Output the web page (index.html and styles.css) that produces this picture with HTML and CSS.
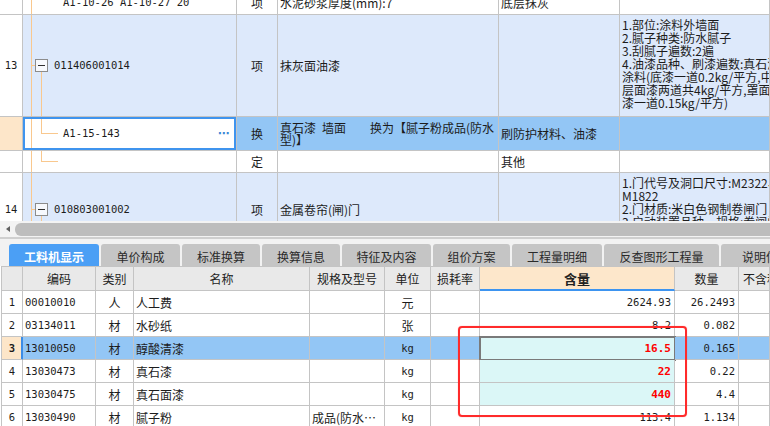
FILE: index.html
```html
<!DOCTYPE html>
<html lang="zh">
<head>
<meta charset="utf-8">
<link rel="stylesheet" href="styles.css">
</head>
<body>
<div class="upper">
  <div class="row r12">
    <div class="c num"></div>
    <div class="c code lv sub"><span class="cut n">A1-10-26&ensp;A1-10-27&ensp;20</span></div>
    <div class="c ctr"><span class="cut">项</span></div>
    <div class="c"><span class="cut">水泥砂浆厚度(mm):7</span></div>
    <div class="c"><span class="cut">底层抹灰</span></div>
    <div class="c"></div>
  </div>
  <div class="row r13 lb">
    <div class="c num wh"><span class="n">13</span></div>
    <div class="c code tree-item"><span class="box"><i></i></span><span class="n">011406001014</span></div>
    <div class="c ctr">项</div>
    <div class="c">抹灰面油漆</div>
    <div class="c"></div>
    <div class="c feat">1.部位:涂料外墙面<br>2.腻子种类:防水腻子<br>3.刮腻子遍数:2遍<br>4.油漆品种、刷漆遍数:真石漆<br>涂料(底漆一道0.2kg/平方,中<br>层面漆两道共4kg/平方,罩面<br>漆一道0.15kg/平方)</div>
  </div>
  <div class="row rsub">
    <div class="c num pe"></div>
    <div class="c code tree-leaf focus"><span class="n">A1-15-143</span><span class="more">⋯</span></div>
    <div class="c ctr bl">换</div>
    <div class="c bl multi">真石漆&ensp;墙面&ensp;&ensp;&ensp;&ensp;换为【腻子粉成品(防水<br>型)】</div>
    <div class="c bl">刷防护材料、油漆</div>
    <div class="c bl"></div>
  </div>
  <div class="row rding">
    <div class="c num"></div>
    <div class="c code tree-leaf"></div>
    <div class="c ctr">定</div>
    <div class="c"></div>
    <div class="c">其他</div>
    <div class="c"></div>
  </div>
  <div class="row r14 lb">
    <div class="c num wh"><span class="n">14</span></div>
    <div class="c code tree-item"><span class="box"><i></i></span><span class="n">010803001002</span></div>
    <div class="c ctr">项</div>
    <div class="c">金属卷帘(闸)门</div>
    <div class="c"></div>
    <div class="c feat">1.门代号及洞口尺寸:M2322、<br>M1822<br>2.门材质:米白色钢制卷闸门<br>3.启动装置品种、规格:卷闸门<br>电机</div>
  </div>
</div>

<div class="hscroll">
  <span class="arrow"></span>
  <span class="thumb"></span>
</div>

<div class="tabbar">
  <div class="tab active w1">工料机显示</div>
  <div class="tab w2">单价构成</div>
  <div class="tab w3">标准换算</div>
  <div class="tab w3">换算信息</div>
  <div class="tab w5">特征及内容</div>
  <div class="tab w6">组价方案</div>
  <div class="tab w7">工程量明细</div>
  <div class="tab w8">反查图形工程量</div>
  <div class="tab w9">说明信息</div>
</div>

<div class="lower">
  <div class="lrow head">
    <div class="d"></div>
    <div class="d ctr">编码</div>
    <div class="d ctr">类别</div>
    <div class="d ctr">名称</div>
    <div class="d ctr">规格及型号</div>
    <div class="d ctr">单位</div>
    <div class="d ctr">损耗率</div>
    <div class="d ctr qty-h">含量</div>
    <div class="d ctr">数量</div>
    <div class="d">不含税市场价</div>
  </div>
  <div class="lrow">
    <div class="d ctr"><span class="n">1</span></div>
    <div class="d"><span class="n">00010010</span></div>
    <div class="d ctr">人</div>
    <div class="d">人工费</div>
    <div class="d"></div>
    <div class="d ctr">元</div>
    <div class="d"></div>
    <div class="d rt"><span class="n">2624.93</span></div>
    <div class="d rt"><span class="n">26.2493</span></div>
    <div class="d"></div>
  </div>
  <div class="lrow">
    <div class="d ctr"><span class="n">2</span></div>
    <div class="d"><span class="n">03134011</span></div>
    <div class="d ctr">材</div>
    <div class="d">水砂纸</div>
    <div class="d"></div>
    <div class="d ctr">张</div>
    <div class="d"></div>
    <div class="d rt"><span class="n">8.2</span></div>
    <div class="d rt"><span class="n">0.082</span></div>
    <div class="d"></div>
  </div>
  <div class="lrow sel">
    <div class="d ctr selnum"><span class="n b">3</span></div>
    <div class="d"><span class="n">13010050</span></div>
    <div class="d ctr">材</div>
    <div class="d">醇酸清漆</div>
    <div class="d"></div>
    <div class="d ctr"><span class="n">kg</span></div>
    <div class="d"></div>
    <div class="d rt cy edit"><span class="n red">16.5</span></div>
    <div class="d rt"><span class="n">0.165</span></div>
    <div class="d"></div>
  </div>
  <div class="lrow">
    <div class="d ctr"><span class="n">4</span></div>
    <div class="d"><span class="n">13030473</span></div>
    <div class="d ctr">材</div>
    <div class="d">真石漆</div>
    <div class="d"></div>
    <div class="d ctr"><span class="n">kg</span></div>
    <div class="d"></div>
    <div class="d rt cy"><span class="n red">22</span></div>
    <div class="d rt"><span class="n">0.22</span></div>
    <div class="d"></div>
  </div>
  <div class="lrow">
    <div class="d ctr"><span class="n">5</span></div>
    <div class="d"><span class="n">13030475</span></div>
    <div class="d ctr">材</div>
    <div class="d">真石面漆</div>
    <div class="d"></div>
    <div class="d ctr"><span class="n">kg</span></div>
    <div class="d"></div>
    <div class="d rt cy"><span class="n red">440</span></div>
    <div class="d rt"><span class="n">4.4</span></div>
    <div class="d"></div>
  </div>
  <div class="lrow">
    <div class="d ctr"><span class="n">6</span></div>
    <div class="d"><span class="n">13030490</span></div>
    <div class="d ctr">材</div>
    <div class="d">腻子粉</div>
    <div class="d">成品(防水…</div>
    <div class="d ctr"><span class="n">kg</span></div>
    <div class="d"></div>
    <div class="d rt"><span class="n">113.4</span></div>
    <div class="d rt"><span class="n">1.134</span></div>
    <div class="d"></div>
  </div>
</div>

<div class="redmark"></div>
</body>
</html>
```

FILE: styles.css
```css
html, body {
  margin: 0;
  padding: 0;
}
body {
  width: 770px;
  height: 426px;
  overflow: hidden;
  background: #ffffff;
  color: #1c1c1c;
  font-family: "Noto Sans CJK SC", "Noto Sans", sans-serif;
  font-size: 12px;
  line-height: 13px;
}

.n {
  font-family: "DejaVu Sans Mono", "Liberation Mono", monospace;
  font-size: 10.5px;
}
.b { font-weight: bold; }

/* ---------- upper grid ---------- */
.upper {
  height: 221px;
  overflow: hidden;
  background: #ffffff;
}
.row {
  display: grid;
  grid-template-columns: 23px 214px 41px 221px 121px 1fr;
}
.c {
  box-sizing: border-box;
  border-right: 1px solid #c4c4c4;
  border-bottom: 1px solid #c4c4c4;
  display: flex;
  align-items: center;
  overflow: hidden;
  white-space: nowrap;
  min-width: 0;
  padding: 0 2px;
}
.c.ctr, .c.num { justify-content: center; padding: 0; }

.r12 { height: 15px; }
.r12 .c { align-items: flex-end; }
.cut { line-height: 13px; margin-bottom: 5px; flex: none; }
.r13 { height: 102px; }
.rsub { height: 34px; }
.rding { height: 22px; }
.r14 { height: 74px; }

.lb .c { background-color: #dde9fb; }
.lb .c.wh { background-color: #ffffff; }
.c.bl { background-color: #93c6f5; }
.c.pe { background-color: #fde6c9; }

.feat {
  align-items: flex-start;
  padding-top: 3px;
  line-height: 13px;
}
.multi { line-height: 12px; padding-top: 0; }

/* tree lines */
.code { padding-left: 12px; gap: 6px; }
.code.sub { padding-left: 40px; }
.lv {
  background-image: linear-gradient(#f9c88e, #f9c88e);
  background-repeat: no-repeat;
  background-position: 8px 0;
  background-size: 1px 100%;
}
.tree-item {
  background-image:
    linear-gradient(#f9c88e, #f9c88e),
    linear-gradient(#f9c88e, #f9c88e),
    linear-gradient(#f9c88e, #f9c88e);
  background-repeat: no-repeat;
  background-position: 8px 0, 8px 50%, 18px 100%;
  background-size: 1px 100%, 4px 1px, 1px calc(50% - 6px);
}
.tree-leaf {
  padding-left: 40px;
  background-color: #ffffff;
  background-image:
    linear-gradient(#f9c88e, #f9c88e),
    linear-gradient(#f9c88e, #f9c88e),
    linear-gradient(#f9c88e, #f9c88e);
  background-repeat: no-repeat;
  background-position: 8px 0, 18px 0, 18px 50%;
  background-size: 1px 100%, 1px 50%, 17px 1px;
}
.focus {
  box-shadow: inset 0 0 0 2px #3f94ee;
  padding-right: 7px;
}
.more {
  margin-left: auto;
  color: #3a86d6;
  font-family: "DejaVu Sans", sans-serif;
  font-weight: bold;
  font-size: 11px;
}
.box {
  box-sizing: border-box;
  width: 13px;
  height: 13px;
  border: 1px solid #8c8c8c;
  background: #f7f9fd;
  display: flex;
  align-items: center;
  justify-content: center;
  flex: none;
}
.box i {
  display: block;
  width: 7px;
  height: 1px;
  background: #303030;
}

/* ---------- horizontal scrollbar ---------- */
.hscroll {
  height: 16px;
  background: #f3f3f3;
  display: flex;
  align-items: center;
}
.arrow {
  width: 0;
  height: 0;
  margin-left: 6px;
  border-top: 3px solid transparent;
  border-bottom: 3px solid transparent;
  border-right: 4px solid #606060;
}
.thumb {
  flex: 1;
  height: 13px;
  margin-left: 5px;
  background: #bdbdbd;
  border-radius: 6px 0 0 6px;
}

/* ---------- tabs ---------- */
.tabbar {
  border-top: 2px solid #cfcfcf;
  background: #f2f2f2;
  height: 29px;
  box-sizing: border-box;
  padding: 5px 0 0 9px;
  display: flex;
  gap: 2px;
  overflow: hidden;
}
.tab {
  flex: none;
  height: 24px;
  box-sizing: border-box;
  background: #c5c5c5;
  color: #2a2a2a;
  border-radius: 3px 3px 0 0;
  display: flex;
  align-items: center;
  justify-content: center;
  white-space: nowrap;
}
.tab.active {
  background: #4b9ff5;
  color: #ffffff;
  font-weight: bold;
}
.w1 { width: 90px; }
.w2 { width: 79px; }
.w3 { width: 78px; }
.w5 { width: 89px; }
.w6 { width: 77px; }
.w7 { width: 90px; }
.w8 { width: 115px; }
.w9 { width: 90px; }

/* ---------- lower grid ---------- */
.lower {
  margin-left: 1px;
  border-left: 1px solid #c4c4c4;
}
.lrow {
  display: grid;
  grid-template-columns: 21px 73px 38px 176px 75px 46px 49px 195px 64px 1fr;
  height: 23px;
}
.d {
  box-sizing: border-box;
  border-right: 1px solid #c4c4c4;
  border-bottom: 1px solid #c4c4c4;
  display: flex;
  align-items: center;
  padding: 0 2px;
  overflow: hidden;
  white-space: nowrap;
  min-width: 0;
}
.d.ctr { justify-content: center; padding: 0; }
.d.rt { justify-content: flex-end; padding-right: 3px; }
.lrow.head {
  height: 25px;
}
.head .d {
  background: #e9e9e9;
  border-top: 1px solid #c4c4c4;
  color: #222222;
}
.head .d:last-child { padding-left: 4px; }
.head .d.qty-h {
  background: #fde7cb;
  border-bottom: 2px solid #3d94f0;
  font-weight: bold;
  font-size: 13px;
}
.sel .d { background: #93c6f5; }
.sel .d.selnum {
  background: #fde6c9;
  border-right-color: #3b8ce6;
  box-shadow: inset -1px 0 0 #3b8ce6;
}
.d.cy, .sel .d.cy { background: #dbf7f7; }
.d.edit {
  outline: 2px solid #7a7a7a;
  outline-offset: -1px;
}
.red {
  color: #ff0000;
  font-weight: bold;
  font-size: 11px;
}

/* ---------- annotation ---------- */
.redmark {
  position: absolute;
  left: 458px;
  top: 326px;
  width: 229px;
  height: 91px;
  box-sizing: border-box;
  border: 2px solid #ff2b2b;
  border-radius: 4px;
  box-shadow: 0 0 1px rgba(255, 0, 0, 0.5);
}
```
